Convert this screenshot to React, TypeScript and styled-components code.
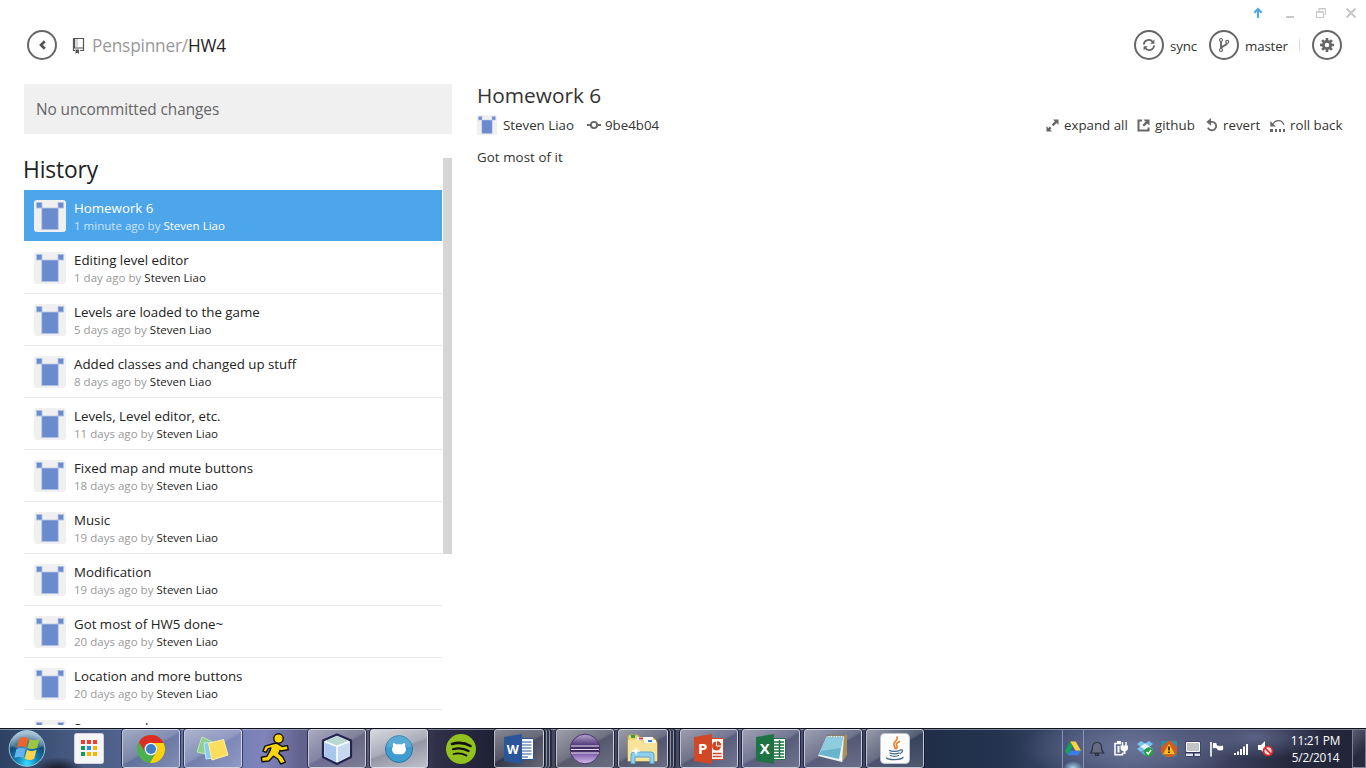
import React from "react";
import styled, { createGlobalStyle, css } from "styled-components";

const Global = createGlobalStyle`
  * { box-sizing: border-box; }
  body { margin: 0; background: #fff; overflow: hidden; }
  svg { display: block; flex: none; }
`;

const Screen = styled.div`
  width: 1366px;
  height: 768px;
  display: flex;
  flex-direction: column;
  overflow: hidden;
  background: #fff;
  color: #333;
  font-family: "Open Sans", "Noto Sans", sans-serif;
  font-size: 13.3px;
  white-space: nowrap;
`;

/* window chrome */
const WindowBar = styled.div`
  height: 26px;
  flex: none;
  display: flex;
  justify-content: flex-end;
  padding: 7px 8px 0 0;
`;

const Header = styled.header`
  height: 38px;
  flex: none;
  display: flex;
  align-items: center;
  padding: 0 24px 0 27px;
`;

const RoundButton = styled.button`
  width: 30px;
  height: 30px;
  padding: 0;
  flex: none;
  display: flex;
  align-items: center;
  justify-content: center;
  border: 2px solid #666;
  border-radius: 50%;
  background: #fff;
`;

const Breadcrumb = styled.h1`
  margin: 2px 0 0 7px;
  flex: 1;
  font-size: 17.3px;
  font-weight: 400;
  letter-spacing: -0.2px;
  line-height: 26px;
  color: #999;
`;
const RepoName = styled.span`
  color: #222;
  letter-spacing: -0.2px;
`;
const RepoIcon = styled.svg`
  margin-left: 15px;
`;
const ToolLabel = styled.span<{ $w: number }>`
  width: ${(p) => p.$w}px;
  padding: 2px 0 0 6px;
  letter-spacing: -0.15px;
`;
const Separator = styled.i`
  width: 1px;
  height: 18px;
  margin-right: 12px;
  background: linear-gradient(#fff, #ccc 50%, #fff);
`;

const Body = styled.main`
  height: 661px;
  flex: none;
  display: flex;
  padding: 20px 23px 0 24px;
  overflow: hidden;
`;

/* left column */
const Sidebar = styled.section`
  width: 428px;
  flex: none;
  display: flex;
  flex-direction: column;
  margin-right: 25px;
`;
const Uncommitted = styled.div`
  height: 50px;
  flex: none;
  padding-left: 12px;
  background: #f0f0f0;
  color: #666;
  font-size: 15.4px;
  letter-spacing: -0.08px;
  line-height: 52px;
`;
const HistoryPane = styled.div`
  flex: 1;
  min-height: 0;
  display: flex;
  justify-content: space-between;
  margin-top: 24px;
`;
const HistoryList = styled.div`
  width: 418px;
`;
const HistoryTitle = styled.h2`
  height: 32px;
  margin: 0 0 0 -1px;
  font-size: 22.8px;
  font-weight: 400;
  line-height: 23px;
  letter-spacing: -0.15px;
  color: #222;
`;
const Scrollbar = styled.div`
  width: 9px;
  height: 396px;
  background: #d6d6d6;
`;
const CommitRow = styled.div<{ $active?: boolean }>`
  height: 52px;
  display: flex;
  padding: 10px 0 0 10px;
  border-bottom: 1px solid ${(p) => (p.$active ? "#fff" : "#ebebeb")};
  background: ${(p) => (p.$active ? "#4ea6ea" : "#fff")};
  color: ${(p) => (p.$active ? "#fff" : "#222")};
`;
const CommitText = styled.div`
  margin: -2px 0 0 8px;
`;
const CommitTitle = styled.div`
  font-size: 13.3px;
  line-height: 20px;
`;
const CommitMeta = styled.div<{ $active?: boolean }>`
  font-size: 11.5px;
  line-height: 16px;
  letter-spacing: 0.02px;
  color: ${(p) => (p.$active ? "#c9e4f9" : "#999")};
`;
const Author = styled.span<{ $active?: boolean }>`
  color: ${(p) => (p.$active ? "#fff" : "#222")};
`;

/* right column */
const Detail = styled.section`
  flex: 1;
`;
const DetailTitle = styled.h2`
  margin: 0;
  height: 31px;
  font-size: 20.8px;
  font-weight: 400;
  line-height: 23px;
  color: #333;
`;
const MetaLine = styled.div`
  height: 20px;
  display: flex;
  align-items: center;
`;
const MetaText = styled.span<{ $w: number; $gap: number }>`
  width: ${(p) => p.$w}px;
  margin-left: ${(p) => p.$gap}px;
  line-height: 20px;
`;
const Actions = styled.div`
  margin-left: auto;
  display: flex;
`;
const Action = styled.span<{ $w: number }>`
  width: ${(p) => p.$w}px;
  display: flex;
  align-items: center;
  gap: 5px;
  line-height: 20px;
`;
const Message = styled.p`
  margin: 12px 0 0;
  line-height: 20px;
  letter-spacing: 0.08px;
`;

/* taskbar */
const Taskbar = styled.footer`
  height: 40px;
  margin-top: 3px;
  flex: none;
  display: flex;
  border-top: 1px solid #10131c;
  box-shadow: inset 0 1px 0 rgba(190, 205, 225, 0.55);
  background:
    radial-gradient(ellipse 26px 14px at 58px 42px, #1f2234 30%, transparent 100%),
    radial-gradient(ellipse 110px 34px at 1130px 18px, rgba(110, 119, 155, 0.85), transparent),
    radial-gradient(ellipse 70px 22px at 1255px 8px, rgba(105, 114, 150, 0.75), transparent),
    linear-gradient(90deg, #2d4262 0, #43567c 60px, #546590 130px, #7580b5 240px, #8084ba 265px, #62638e 300px, #5a5970 400px, #303048 435px, #1f2136 490px, #4b4d60 560px, #444861 650px, #4d5275 740px, #474e6d 850px, #202e48 930px, #24334f 1000px, #3a4767 1060px, #4f5a7c 1130px, #434a69 1200px, #25293f 1290px, #222539 1366px);
`;
const StartSlot = styled.div`
  width: 60px;
  padding: 1px 0 0 8px;
`;
const TaskItem = styled.div<{ $open?: boolean; $lit?: string; $stack?: boolean }>`
  width: 58px;
  height: 39px;
  margin-right: 4px;
  flex: none;
  display: flex;
  align-items: center;
  justify-content: center;
  ${(p) =>
    p.$open &&
    css`
      border: 1px solid rgba(225, 230, 242, 0.75);
      border-radius: 3px;
      outline: 1px solid rgba(10, 12, 28, 0.6);
      outline-offset: 0;
      background: ${p.$lit ?? "linear-gradient(150deg, rgba(255,255,255,.46), rgba(255,255,255,.22) 48%, rgba(255,255,255,.08) 52%, rgba(255,255,255,.2))"};
    `}
  ${(p) =>
    p.$stack &&
    css`
      width: 50px;
      margin-right: 12px;
      box-shadow: 2px 0 0 #30364c, 3px 0 0 #8d92a5, 5px 0 0 #30364c, 6px 0 0 #8d92a5, 8px 0 0 #252a3f;
    `}
`;
const Tray = styled.div`
  margin-left: auto;
  display: flex;
  height: 39px;
  align-items: center;
`;
const TraySlot = styled.span<{ $hot?: boolean }>`
  width: 24px;
  height: 38px;
  display: flex;
  align-items: center;
  justify-content: center;
  ${(p) =>
    p.$hot &&
    css`
      width: 22px;
      margin-right: 1px;
      border: solid rgba(180, 190, 215, 0.6);
      border-width: 0 1px;
      background: radial-gradient(ellipse 10px 7px at 50% 100%, #a9d3f0, transparent);
    `}
`;
const Clock = styled.div`
  width: 75px;
  padding-left: 2px;
  text-align: center;
  color: #fff;
  font-size: 11.8px;
  line-height: 17px;
  letter-spacing: -0.2px;
`;
const ShowDesktop = styled.div`
  width: 14px;
  height: 39px;
  flex: none;
  border: 1px solid #7c8193;
  background: linear-gradient(135deg, #585d70, #292c3e 60%);
`;

const Avatar = ({ size = 32 }: { size?: number }) => (
  <svg width={size} height={size} viewBox="0 0 32 32">
    <rect width="32" height="32" rx="3" fill="#f0f0f0" />
    <g fill="#6b8bcf" stroke="#b4c3e5" strokeWidth=".8">
      <rect x="2.4" y="2.4" width="5.6" height="5.6" />
      <rect x="24" y="2.4" width="5.6" height="5.6" />
      <rect x="7.8" y="8" width="16.4" height="21.6" />
    </g>
  </svg>
);

const WindowControls = () => (
  <svg width="108" height="14" viewBox="1250 7 108 14">
    <path d="M1258 18V9M1254.3 12.8L1258 9l3.7 3.8" fill="none" stroke="#4ea6ea" strokeWidth="2.1" />
    <path d="M1286 17h8" stroke="#c8c8c8" strokeWidth="2" />
    <path d="M1316.5 11.5h7v6h-7zM1316 12.2h8M1319 11V8.5h6.5v6H1324M1318.5 9h7" fill="none" stroke="#c8c8c8" />
    <path d="M1346.5 8.5l9 9M1355.5 8.5l-9 9" stroke="#c8c8c8" strokeWidth="2.2" />
  </svg>
);

const BackIcon = () => (
  <svg width="10" height="12" viewBox="0 0 10 12">
    <path d="M7.8 2.2L4 6l3.8 3.8" fill="none" stroke="#555" strokeWidth="2.7" />
  </svg>
);
const BookIcon = () => (
  <RepoIcon width="13" height="17" viewBox="0 0 13 17">
    <path d="M2 1.500h9.500v12H8M3 13.500H1.500v-12" fill="none" stroke="#555" strokeWidth="1.200" />
    <path d="M1 1h2.200v10H1zM1 10.500h11v1.100H1zM3.500 12.500h3.500V17l-1.700-1.500L3.500 17z" fill="#555" />
    <path d="M5 2.500v7.500" stroke="#555" strokeDasharray="1 1" />
  </RepoIcon>
);
const SyncIcon = () => (
  <svg width="14" height="14" viewBox="0 0 14 14">
    <g fill="none" stroke="#666" strokeWidth="1.7">
      <path d="M1.8 6.6A5 5 0 0 1 10.8 4" />
      <path d="M12.2 7.4A5 5 0 0 1 3.2 10" />
    </g>
    <path d="M12.4 1.5v4.3H8.2zM1.6 12.5V8.2h4.2z" fill="#666" />
  </svg>
);
const BranchIcon = () => (
  <svg width="12" height="16" viewBox="0 0 12 16">
    <g fill="#fff" stroke="#666" strokeWidth="1.2">
      <path d="M3 4v8M9 5.8c0 3.4-6 2.8-6 6" fill="none" strokeWidth="1.9" />
      <circle cx="3" cy="3" r="1.5" />
      <circle cx="9.2" cy="4.8" r="1.5" />
      <circle cx="3" cy="13" r="1.5" />
    </g>
  </svg>
);
const GearIcon = () => (
  <svg width="14" height="14" viewBox="-7 -7 14 14">
    <circle r="3.7" fill="none" stroke="#666" strokeWidth="2.8" />
    {[0, 45, 90, 135, 180, 225, 270, 315].map((a) => (
      <rect key={a} x="-1.3" y="-7" width="2.6" height="3" fill="#666" transform={`rotate(${a})`} />
    ))}
  </svg>
);
const CommitIcon = () => (
  <svg width="14" height="10" viewBox="0 0 14 10">
    <path d="M0 5h4M10 5h4" stroke="#666" strokeWidth="2" />
    <circle cx="7" cy="5" r="3.1" fill="none" stroke="#666" strokeWidth="1.9" />
  </svg>
);
const ExpandIcon = () => (
  <svg width="13" height="13" viewBox="0 0 13 13">
    <path d="M7 .5h5.5V6l-1.9-1.9-3.2 3.2-1.7-1.7 3.2-3.2zM6 12.5H.5V7l1.9 1.9 1.4-1.400L5.500 9.200l-1.400 1.400z" fill="#666" />
  </svg>
);
const ExternalIcon = () => (
  <svg width="13" height="13" viewBox="0 0 13 13">
    <path d="M5 1.500H1.500v10h10V8.500" fill="none" stroke="#666" strokeWidth="2" />
    <path d="M6.500.5h6v6l-2.200-2.100-3.200 3.200-1.700-1.700 3.200-3.200z" fill="#666" />
  </svg>
);
const RevertIcon = () => (
  <svg width="12" height="14" viewBox="0 0 12 14">
    <path d="M4 3.8h2.8a4.3 4.3 0 1 1-4.9 5.8" fill="none" stroke="#666" strokeWidth="1.8" />
    <path d="M.3 3.9L5 0v7.800z" fill="#666" />
  </svg>
);
const RollbackIcon = () => (
  <svg width="15" height="13" viewBox="0 0 15 13">
    <path d="M3 4.800c2.400-4.300 9-4.800 11 1.200" fill="none" stroke="#666" strokeWidth="1.200" />
    <path d="M.3 2v5.500h5.500z" fill="#666" />
    <path d="M0 10h3v3H0zM5 10h2v3H5zM9 10h2v3H9zM13 10h2v3h-2z" fill="#666" />
  </svg>
);

const StartOrb = () => (
  <svg width="38" height="38" viewBox="0 0 38 38">
    <defs>
      <radialGradient id="orb" cx=".5" cy=".92" r=".85">
        <stop offset="0" stopColor="#35e0ff" />
        <stop offset=".35" stopColor="#1382b8" />
        <stop offset=".7" stopColor="#144c77" />
        <stop offset="1" stopColor="#8fb0c8" />
      </radialGradient>
    </defs>
    <circle cx="19" cy="18.5" r="17.8" fill="url(#orb)" stroke="#9fc4d8" strokeWidth="1" />
    <path d="M3 16a16 16 0 0 1 32 0c-10 4-21 5-32 0" fill="#fff" opacity=".22" />
    <path d="M11.500 8.500c3-2 6-1.600 9 0l-2.400 9c-3-1.600-6-1.800-9.200 0z" fill="#e9652b" />
    <path d="M21.800 9.300c3 1.500 6 1.500 9.700-.5l-2.400 9c-3 1.600-6 1.800-9.700 0z" fill="#9cc83f" />
    <path d="M8.500 19.100c3-1.700 6-1.500 9.200 0l-2.300 9c-3-1.500-6-1.500-9.200 0z" fill="#63b4ec" />
    <path d="M19 19.700c3 1.700 6 1.500 9.600 0l-2.400 9c-3 1.700-6 1.500-9.600 0z" fill="#fbd34d" />
  </svg>
);
const AppsIcon = () => (
  <svg width="30" height="31" viewBox="0 0 30 31">
    <rect x=".5" y=".5" width="29" height="30" rx="2" fill="#f5f5f5" stroke="#cfd2da" />
    {["#f23b2f", "#f23b2f", "#f23b2f", "#0f9d58", "#1a8cff", "#fbb200", "#0f9d58", "#fbb200", "#fbb200"].map((c, i) => (
      <rect key={i} x={7 + (i % 3) * 6} y={7 + Math.floor(i / 3) * 6} width="4" height="4" fill={c} />
    ))}
  </svg>
);
const ChromeIcon = () => (
  <svg width="30" height="30" viewBox="-15 -15 30 30">
    <circle r="14" fill="#4caf50" />
    <path d="M-12.100 -7A14 14 0 0 1 12.600 -6H0A6 6 0 0 0 -5.800 3z" fill="#dd2c23" />
    <path d="M12.600 -6A14 14 0 0 1 -1 14L5.500 3A6 6 0 0 0 0 -6z" fill="#fdd20a" />
    <circle r="6.3" fill="#f5f5f5" />
    <circle r="5" fill="#3d7fc9" />
  </svg>
);
const NotesIcon = () => (
  <svg width="34" height="28" viewBox="0 0 34 28">
    <path d="M6 2l13 6-5 12L1 17z" fill="#8fd08a" stroke="#bde5b9" />
    <path d="M8 8l14-1 2 15-14 2z" fill="#8ccaf4" stroke="#c8e6fb" />
    <path d="M12.500 8.500l15-4 4.500 15.500-16 5z" fill="#fbdf5c" stroke="#fff0a0" />
  </svg>
);
const RunnerIcon = () => (
  <svg width="30" height="32" viewBox="0 0 30 32">
    <path
      d="M14 10.500c2-.6 4.500-.2 6 1.700l2 1.300 5.500-.9.700 4.200-7 1.200-1.200-.6-1.200 3 4 3.500 2.700 5.300-4.800 1.800-2.900-5-4.400-2.800-4.400 4.800-7 .7-.7-4.500 5.600-1 3.100-5.500.9-2.800-2.600.7-2.300 3.700-3-1.200 2-5z"
      fill="#fdd50b"
      stroke="#111"
      strokeWidth="1.400"
      strokeLinejoin="round"
    />
    <circle cx="18.500" cy="5.500" r="4.700" fill="#fdd50b" stroke="#111" strokeWidth="1.400" />
  </svg>
);
const CubeIcon = () => (
  <svg width="32" height="34" viewBox="0 0 32 34">
    <path d="M16 2.500l14 6v16.500L16 32 2 25V8.500z" fill="#e6f0f8" stroke="#22234f" strokeWidth="2.200" strokeLinejoin="round" />
    <path d="M16 4L27.500 9 16 13.500 4.500 9z" fill="#b9d8d2" />
    <path d="M3.800 10L15.500 15v15L3.800 24.200z" fill="#a9c6ec" />
    <path d="M16.500 15L28.200 10v14.200l-11.700 5.800z" fill="#c6d9f0" />
    <path d="M16 14v16M3.800 9.700L16 14.500l12.200-4.800" fill="none" stroke="#f6fbff" strokeWidth="1.500" />
  </svg>
);
const CatIcon = () => (
  <svg width="30" height="30" viewBox="0 0 30 30">
    <circle cx="15" cy="15" r="13.5" fill="#3e9cce" stroke="#2a78a4" />
    <path d="M2 13a13 13 0 0 1 26 0z" fill="#fff" opacity=".14" />
    <path d="M9.300 9c1.200.2 2.200.8 3 1.500 1.800-.4 3.600-.4 5.400 0 .8-.7 1.800-1.300 3-1.500.5 1.300.5 2.500.3 3.500 1 1.200 1.200 3.200.6 4.800-.5 1.500-1.800 2.600-3.200 3h-6.800c-1.400-.4-2.700-1.500-3.200-3-.6-1.600-.4-3.600.6-4.800-.2-1-.2-2.200.3-3.500z" fill="#fff" />
  </svg>
);
const SpotifyIcon = () => (
  <svg width="30" height="30" viewBox="0 0 30 30">
    <circle cx="15" cy="15" r="15" fill="#92c01f" />
    <g fill="none" stroke="#111" strokeLinecap="round">
      <path d="M6 10c6-1.800 13-1.200 18.500 2" strokeWidth="2.600" />
      <path d="M7 15.200c5-1.500 11-.9 15.600 1.800" strokeWidth="2.200" />
      <path d="M7.500 20c4.500-1.200 9-.7 13 1.600" strokeWidth="1.800" />
    </g>
  </svg>
);
const OfficeSvg = styled.svg`
  font-family: "Open Sans", sans-serif;
  font-weight: 700;
`;
const OfficeIcon = ({ letter, color }: { letter: "W" | "P" | "X"; color: string }) => (
  <OfficeSvg width="30" height="30" viewBox="0 0 30 30">
    <path d="M17 4.500h12.500v21H17z" fill="#fff" stroke={color} />
    {letter === "W" && <path d="M18 8h9.500M18 11h9.500M18 14h9.500M18 17h9.500M18 20h9.500M18 23h6" stroke={color} strokeWidth="1.200" />}
    {letter === "X" && <path d="M18 8h10M18 11h10M18 14h10M18 17h10M18 20h10M18 23h10M23.500 6v18" stroke={color} strokeWidth="1.500" />}
    {letter === "P" && (
      <>
        <circle cx="22.500" cy="12" r="4.500" fill={color} />
        <path d="M22.500 12V6.500A5.500 5.500 0 0 1 28 12z" fill={color} stroke="#fff" />
        <path d="M19 19.500h8.500M19 22.500h8.500" stroke={color} strokeWidth="1.400" />
      </>
    )}
    <path d="M0 3l18-3v30L0 27z" fill={color} />
    <text x="8.700" y="20.300" fontSize={letter === "W" ? 12.5 : 15} fill="#fff" textAnchor="middle">{letter}</text>
  </OfficeSvg>
);
const EclipseIcon = () => (
  <svg width="32" height="32" viewBox="0 0 32 32">
    <defs>
      <linearGradient id="ecl" x2="0" y2="1">
        <stop offset="0" stopColor="#b9a8d0" />
        <stop offset=".35" stopColor="#57407f" />
        <stop offset=".55" stopColor="#382456" />
        <stop offset=".7" stopColor="#8c6bb5" />
        <stop offset="1" stopColor="#d0c0e8" />
      </linearGradient>
    </defs>
    <circle cx="16" cy="16" r="14.800" fill="url(#ecl)" stroke="#4a3370" />
    <path d="M2 13h28M2 16.500h28M2 20h28" stroke="#e9e4f2" strokeWidth="1.200" />
  </svg>
);
const ExplorerIcon = () => (
  <svg width="34" height="32" viewBox="0 0 34 32">
    <path d="M2 4l1-2h9l2 3h14l3 4v19H2z" fill="#f1d477" stroke="#c9a84b" />
    <path d="M11 4h16v3H11zM18 7h12v3H18z" fill="#fff" />
    <path d="M5 2h4v3H5z" fill="#2da33c" /><path d="M13 4.500h4v2h-4z" fill="#d33f2d" /><path d="M22 7h4v2h-4z" fill="#2f83d8" />
    <path d="M2 7h12l3 3h14v18H2z" fill="#f8e39b" />
    <path d="M5 30.500V22q0-3 3-3h17q3 0 3 3v8.500h-4V24H9v6.500z" fill="#8fd0ec" stroke="#5aa6cb" />
    <path d="M10 14v8M6 18h8" stroke="#fff" strokeWidth="1" />
    <circle cx="10" cy="18" r="2.200" fill="#fff" opacity=".8" />
  </svg>
);
const NotepadIcon = () => (
  <svg width="32" height="32" viewBox="0 0 32 32">
    <path d="M12 2h18v20l-4 6z" fill="#a8905a" />
    <path d="M10 3h17l-2 26L1 23z" fill="#e9f3f6" />
    <path d="M10 4h16l-4 22L2 21.500z" fill="#68b4cb" />
    <path d="M10 4h16l-2 11L4 18z" fill="#9bd6e4" opacity=".75" />
    <path d="M10 2.500h18" stroke="#777" strokeWidth="2" strokeDasharray="1.500 1" />
    <path d="M22 26l3-1.500.5 4.500z" fill="#fff" />
  </svg>
);
const JavaIcon = () => (
  <svg width="30" height="31" viewBox="0 0 30 31">
    <rect x=".5" y=".5" width="29" height="30" rx="4" fill="#fcfcfc" stroke="#bcc4d4" />
    <g fill="none" strokeLinecap="round">
      <path d="M17 4c2 3-5 5-2.800 8.500.8 1.300 1.200 1.800.8 3M19.500 8.500c-3 1.500-4 2.500-2.500 4.500 .7 1 0 2-.8 2.700" stroke="#ed7d22" strokeWidth="1.600" />
      <path d="M9.500 17.500c2 1.200 8 1 10.500 0M20 17c3-1 3.500 2 .2 3.500M10 20c2 1.200 7 1.200 9 0M10.500 22.500c2 1 6 1 8 0M6.500 25c2 2.200 14 2.200 16.500-.5" stroke="#44688c" strokeWidth="1.300" />
    </g>
  </svg>
);

const DriveTray = () => (
  <svg width="16" height="15" viewBox="0 0 16 15">
    <path d="M5.300.5L0 9.700l2.700 4.600L8 5.100z" fill="#14a05e" />
    <path d="M5.300.5h5.400L16 9.700h-5.400z" fill="#ffd23e" />
    <path d="M5.500 9.700H16l-2.700 4.600H2.700z" fill="#3b7de8" />
  </svg>
);
const BellTray = () => (
  <svg width="16" height="17" viewBox="0 0 16 17">
    <path d="M1.500 13c2-2 2-3 2-6C3.500 1 12.500 1 12.500 7c0 3 0 4 2 6zM6.500 14h3v1.500h-3z" fill="#666c80" stroke="#2b3044" strokeWidth="1.200" />
  </svg>
);
const PlugTray = () => (
  <svg width="16" height="17" viewBox="0 0 16 17">
    <path d="M8 3.500H2v11.300h7.500v-2" fill="none" stroke="#fff" strokeWidth="1.600" />
    <path d="M4 1h4v2H4zM4.500 6h2v6.500h-2z" fill="#fff" />
    <path d="M9.500 2v4M13 2v4" stroke="#fff" strokeWidth="1.500" />
    <path d="M7.500 5.500h7.500v2.500c0 2-1 3-2.500 3v3h-2v-3c-2 0-3-1-3-3z" fill="#fff" />
  </svg>
);
const DropboxTray = () => (
  <svg width="18" height="17" viewBox="0 0 18 17">
    <path d="M5 1l4 2.500L13 1l4 3-3.200 2.500L17 9l-4 3-4-2.500L5 12 1 9l3.200-2.500L1 4z" fill="#78c4f2" />
    <path d="M5 12.500l4-2 4 2-4 3z" fill="#5aaee3" />
    <path d="M9 3.500l4.600 3L9 9.500 4.400 6.500z" fill="#eaf6ff" />
    <circle cx="12.700" cy="12" r="4.500" fill="#25a13a" />
    <path d="M10.500 12l1.700 2 2.800-4" fill="none" stroke="#fff" strokeWidth="1.400" />
  </svg>
);
const WarningTray = () => (
  <svg width="16" height="16" viewBox="0 0 16 16">
    <path d="M0 0h16v16H0z" fill="#cf5a28" />
    <path d="M0 0h7L0 6zM10 0h6v6z" fill="#2d91a7" />
    <path d="M0 11l5 5H0zM12 16l4-4v4z" fill="#2e7fa0" />
    <path d="M8 2l6.500 11.500h-13z" fill="#fdbb2c" stroke="#b8670e" strokeWidth=".7" />
    <path d="M8 5.500v4M8 10.500v1.500" stroke="#111" strokeWidth="1.500" />
  </svg>
);
const DisplayTray = () => (
  <svg width="16" height="16" viewBox="0 0 16 16">
    <path d="M.5.500h15v15H.500z" fill="#2d3454" />
    <path d="M1.500 1.500h13v9h-13z" fill="#c1c3cb" stroke="#fff" />
    <path d="M1 12.500h7V15H1zM9.500 12.500H15V15H9.500z" fill="#dde1f5" />
  </svg>
);
const FlagTray = () => (
  <svg width="16" height="16" viewBox="0 0 16 16">
    <path d="M2 1v14.500" stroke="#fff" strokeWidth="1.600" />
    <path d="M3.500 2c2-1 3.500-.5 4.500.5v1.500c2 1 4 1 6.500 0v5c-2.500 1.200-5 1-6.500 0V8c-1.500-1-3-1-4.500 0z" fill="#fff" stroke="#20253a" strokeWidth=".5" />
  </svg>
);
const SignalTray = () => (
  <svg width="16" height="14" viewBox="0 0 16 14">
    <path d="M1 11h2v2H1zM4 9.500h2V13H4zM7 7h2v6H7zM10 4.500h2V13h-2zM13 2h2v11h-2z" fill="#fff" />
  </svg>
);
const SpeakerTray = () => (
  <svg width="17" height="17" viewBox="0 0 17 17">
    <path d="M1 5h3l4-4v13l-4-4H1z" fill="#fff" />
    <circle cx="11" cy="11" r="4.500" fill="#f6d5d5" stroke="#d9272e" strokeWidth="1.700" />
    <path d="M8 8l6 6" stroke="#d9272e" strokeWidth="1.700" />
  </svg>
);

const commits = [
  ["Homework 6", "1 minute ago"],
  ["Editing level editor", "1 day ago"],
  ["Levels are loaded to the game", "5 days ago"],
  ["Added classes and changed up stuff", "8 days ago"],
  ["Levels, Level editor, etc.", "11 days ago"],
  ["Fixed map and mute buttons", "18 days ago"],
  ["Music", "19 days ago"],
  ["Modification", "19 days ago"],
  ["Got most of HW5 done~", "20 days ago"],
  ["Location and more buttons", "20 days ago"],
  ["Some saved", "21 days ago"],
];

const trayIcons = [BellTray, PlugTray, DropboxTray, WarningTray, DisplayTray, FlagTray, SignalTray, SpeakerTray];

export default function App() {
  return (
    <Screen>
      <Global />
      <WindowBar>
        <WindowControls />
      </WindowBar>
      <Header>
        <RoundButton><BackIcon /></RoundButton>
        <BookIcon />
        <Breadcrumb>Penspinner/<RepoName>HW4</RepoName></Breadcrumb>
        <RoundButton><SyncIcon /></RoundButton>
        <ToolLabel $w={45}>sync</ToolLabel>
        <RoundButton><BranchIcon /></RoundButton>
        <ToolLabel $w={60}>master</ToolLabel>
        <Separator />
        <RoundButton><GearIcon /></RoundButton>
      </Header>
      <Body>
        <Sidebar>
          <Uncommitted>No uncommitted changes</Uncommitted>
          <HistoryPane>
            <HistoryList>
              <HistoryTitle>History</HistoryTitle>
              {commits.map(([title, when], i) => (
                <CommitRow key={title} $active={i === 0}>
                  <Avatar />
                  <CommitText>
                    <CommitTitle>{title}</CommitTitle>
                    <CommitMeta $active={i === 0}>
                      {when} by <Author $active={i === 0}>Steven Liao</Author>
                    </CommitMeta>
                  </CommitText>
                </CommitRow>
              ))}
            </HistoryList>
            <Scrollbar />
          </HistoryPane>
        </Sidebar>
        <Detail>
          <DetailTitle>Homework 6</DetailTitle>
          <MetaLine>
            <Avatar size={20} />
            <MetaText $w={84} $gap={6}>Steven Liao</MetaText>
            <CommitIcon />
            <MetaText $w={70} $gap={4}>9be4b04</MetaText>
            <Actions>
              <Action $w={91}><ExpandIcon />expand all</Action>
              <Action $w={69}><ExternalIcon />github</Action>
              <Action $w={64}><RevertIcon />revert</Action>
              <Action $w={73}><RollbackIcon />roll back</Action>
            </Actions>
          </MetaLine>
          <Message>Got most of it</Message>
        </Detail>
      </Body>
      <Taskbar>
        <StartSlot><StartOrb /></StartSlot>
        <TaskItem><AppsIcon /></TaskItem>
        <TaskItem $open><ChromeIcon /></TaskItem>
        <TaskItem $open><NotesIcon /></TaskItem>
        <TaskItem><RunnerIcon /></TaskItem>
        <TaskItem $open><CubeIcon /></TaskItem>
        <TaskItem $open $lit="linear-gradient(160deg, #d8d9de, #a9abb8 48%, #9597a6 52%, #bfc0cb)"><CatIcon /></TaskItem>
        <TaskItem><SpotifyIcon /></TaskItem>
        <TaskItem $open $stack><OfficeIcon letter="W" color="#2a5699" /></TaskItem>
        <TaskItem $open><EclipseIcon /></TaskItem>
        <TaskItem $open $stack><ExplorerIcon /></TaskItem>
        <TaskItem $open><OfficeIcon letter="P" color="#d24726" /></TaskItem>
        <TaskItem $open><OfficeIcon letter="X" color="#1f7244" /></TaskItem>
        <TaskItem $open><NotepadIcon /></TaskItem>
        <TaskItem $open><JavaIcon /></TaskItem>
        <Tray>
          <TraySlot $hot><DriveTray /></TraySlot>
          {trayIcons.map((Icon, i) => (
            <TraySlot key={i}><Icon /></TraySlot>
          ))}
          <Clock>11:21 PM<br />5/2/2014</Clock>
        </Tray>
        <ShowDesktop />
      </Taskbar>
    </Screen>
  );
}
